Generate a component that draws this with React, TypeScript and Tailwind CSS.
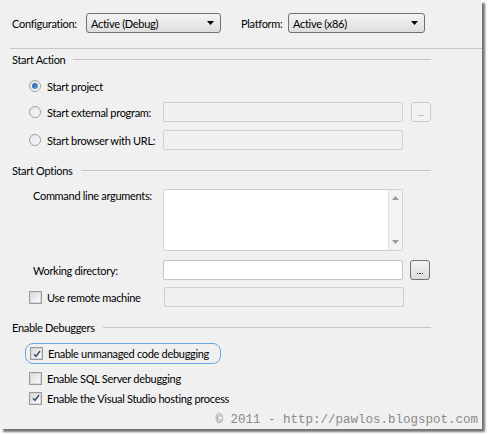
import React from "react";

function Dropdown({ w, text }: { w: string; text: string }) {
  return (
    <div
      className={`${w} h-[20px] flex items-center justify-between rounded-[3px] border border-[#707070] bg-gradient-to-b from-[#f4f4f4] to-[#dedede] pl-[4px] pr-[6px]`}
    >
      <span className="leading-none whitespace-nowrap">{text}</span>
      <svg width="7" height="4" viewBox="0 0 7 4">
        <path d="M0 0 H7 L3.5 4 Z" fill="#000" />
      </svg>
    </div>
  );
}

function Radio({ checked }: { checked?: boolean }) {
  return (
    <div className="w-[12px] h-[12px] rounded-full border border-[#a0a0a0] bg-gradient-to-br from-[#e6e6e6] to-[#fafafa] flex items-center justify-center">
      {checked && (
        <div className="w-[6px] h-[6px] rounded-full bg-gradient-to-br from-[#2a5d9a] to-[#5ea0e0]" />
      )}
    </div>
  );
}

function Check({ checked }: { checked?: boolean }) {
  return (
    <div className="w-[13px] h-[13px] border border-[#9a9a9a] bg-[#f4f4f4] flex items-center justify-center">
      <div className="w-[11px] h-[11px] border border-[#d8d8d8] bg-gradient-to-br from-[#dcdcdc] to-[#fbfbfb] flex items-center justify-center">
        {checked && (
          <svg width="8" height="8" viewBox="0 0 8 8">
            <path d="M1 4.2 L3 6.4 L7 1" stroke="#34496a" strokeWidth="1.4" fill="none" />
          </svg>
        )}
      </div>
    </div>
  );
}

function TextBox({ white }: { white?: boolean }) {
  return (
    <div
      className={`w-[240px] h-[20px] rounded-[2px] border ${
        white ? "bg-white border-[#c6c6c6]" : "bg-[#f0f0f0] border-[#cfcfcf]"
      }`}
    />
  );
}

function Dots({ enabled }: { enabled?: boolean }) {
  return (
    <div
      className={`w-[20px] h-[20px] rounded-[3px] border flex items-end justify-center pb-[5px] ${
        enabled
          ? "border-[#707070] bg-gradient-to-b from-[#f4f4f4] to-[#dcdcdc]"
          : "border-[#cccccc] bg-[#f2f2f2]"
      }`}
    >
      <div className="flex gap-[1px]">
        {[0, 1, 2].map((i) => (
          <div
            key={i}
            className={`w-[1.5px] h-[1.5px] ${enabled ? "bg-[#303040]" : "bg-[#b0b0b0]"}`}
          />
        ))}
      </div>
    </div>
  );
}

function Header({ label }: { label: string }) {
  return (
    <div className="flex items-center h-[14px] pl-[12px] pr-[51px]">
      <span className="leading-none whitespace-nowrap">{label}</span>
      <div className="flex-1 h-px bg-[#c6c6c6] ml-[8px]" />
    </div>
  );
}

export default function App() {
  return (
    <div className="w-[488px] h-[434px] bg-white overflow-hidden">
      <div className="w-[482px] h-[429px] bg-[#f0f0f0] shadow-[3px_3px_2px_rgba(0,0,0,0.55)] flex flex-col text-[11px] tracking-[-0.3px] text-[#000] font-['Lato',sans-serif]">
        {/* top row */}
        <div className="flex items-center mt-[13px] h-[20px]">
          <span className="ml-[12px] w-[74px] leading-none whitespace-nowrap">Configuration:</span>
          <Dropdown w="w-[135px]" text="Active (Debug)" />
          <span className="ml-[20px] w-[47px] leading-none whitespace-nowrap">Platform:</span>
          <Dropdown w="w-[137px]" text="Active (x86)" />
        </div>
        <div className="mt-[15px] ml-[10px] h-px bg-[#c6c6c6]" />

        <div className="mt-[3px]">
          <Header label="Start Action" />
        </div>

        <div className="flex items-center h-[20px] mt-[10px] pl-[29px]">
          <Radio checked />
          <span className="ml-[6px] leading-none whitespace-nowrap">Start project</span>
        </div>
        <div className="flex items-center h-[20px] mt-[6px] pl-[29px]">
          <Radio />
          <span className="ml-[6px] w-[116px] leading-none whitespace-nowrap">Start external program:</span>
          <TextBox />
          <div className="ml-[8px]">
            <Dots />
          </div>
        </div>
        <div className="flex items-center h-[20px] mt-[8px] pl-[29px]">
          <Radio />
          <span className="ml-[6px] w-[116px] leading-none whitespace-nowrap">Start browser with URL:</span>
          <TextBox />
        </div>

        <div className="mt-[13px]">
          <Header label="Start Options" />
        </div>

        <div className="flex items-start mt-[12px] pl-[33px]">
          <span className="w-[130px] leading-[14px] whitespace-nowrap">Command line arguments:</span>
          <div className="w-[240px] h-[62px] rounded-[2px] border border-[#d0d0d0] bg-white flex justify-end">
            <div className="w-[14px] h-full bg-[#f3f3f3] border-l border-[#e2e2e2] flex flex-col items-center justify-between py-[6px]">
              <svg width="7" height="4" viewBox="0 0 7 4">
                <path d="M0 4 L3.5 0 L7 4 Z" fill="#9a9a9a" />
              </svg>
              <svg width="7" height="4" viewBox="0 0 7 4">
                <path d="M0 0 H7 L3.5 4 Z" fill="#9a9a9a" />
              </svg>
            </div>
          </div>
        </div>

        <div className="flex items-center h-[20px] mt-[9px] pl-[33px]">
          <span className="w-[130px] leading-none whitespace-nowrap">Working directory:</span>
          <TextBox white />
          <div className="ml-[7px]">
            <Dots enabled />
          </div>
        </div>

        <div className="flex items-center h-[20px] mt-[7px] pl-[29px]">
          <Check />
          <span className="ml-[5px] w-[117px] leading-none whitespace-nowrap">Use remote machine</span>
          <TextBox />
        </div>

        <div className="mt-[13px]">
          <Header label="Enable Debuggers" />
        </div>

        <div className="mt-[9px] ml-[25px] w-[196px] h-[21px] rounded-[8px] border-[1.5px] border-[#6aa6e4] flex items-center pl-[4px]">
          <Check checked />
          <span className="ml-[5px] leading-none whitespace-nowrap">Enable unmanaged code debugging</span>
        </div>

        <div className="flex items-center h-[20px] mt-[4px] pl-[29px]">
          <Check />
          <span className="ml-[5px] leading-none whitespace-nowrap">Enable SQL Server debugging</span>
        </div>
        <div className="flex items-center h-[20px] pl-[29px]">
          <Check checked />
          <span className="ml-[5px] leading-none whitespace-nowrap">Enable the Visual Studio hosting process</span>
        </div>

        <div className="flex justify-end items-center h-[16px] mt-[4px] pr-[4px]">
          <span className="font-['Liberation_Mono',monospace] text-[12.5px] tracking-normal text-[#8a8a8a] leading-none whitespace-pre">
            © 2011 - http://pawlos.blogspot.com
          </span>
        </div>
      </div>
    </div>
  );
}
